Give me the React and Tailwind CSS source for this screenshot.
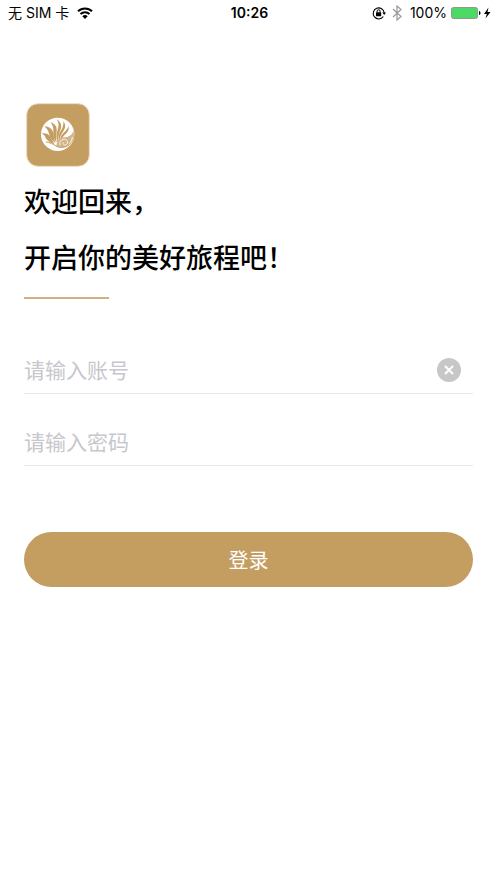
import { useState } from "react";

function Logo() {
    return (
        <svg viewBox="-30 -27 192 192" className="h-16 w-16" aria-hidden="true">
            <rect
                x="-28"
                y="-25"
                width="188"
                height="188"
                rx="34"
                fill="#c49d61"
                stroke="#eadcc5"
                strokeWidth="3"
            />
            <circle cx="65" cy="67" r="50" fill="#fff" />
            {/* feathers */}
            <g fill="#c49d61">
                <path d="M16 64c12-2 22 1 27 10 4 8 7 15 13 22-13-4-22-9-27-18-3-7-7-11-13-14z" />
                <path d="M25 43c15 1 25 8 27 21 1 11 3 20 7 29-12-8-18-17-20-28-2-9-7-17-14-22z" />
                <path d="M43 30c14 5 21 14 19 28-2 12-2 23 0 34-9-11-12-22-10-34 1-11-2-20-9-28z" />
                <path d="M62 22c13 8 17 19 11 32-5 13-7 25-7 38-6-12-6-25-1-38 4-12 4-22-3-32z" />
                <path d="M82 28c8 10 7 21-1 31-7 10-11 20-12 32-3-13-1-24 5-34 7-10 9-19 8-29z" />
                <path d="M97 42c3 9 0 17-8 24-8 7-13 15-17 25-1-13 3-22 11-29 7-6 12-12 14-20z" />
            </g>
            {/* shell */}
            <path
                d="M29 90c12 0 22 4 32 12 2-16 10-24 24-26 14-1 23-7 27-20 4 14 2 27-6 37-12 15-32 18-50 9-9-5-17-9-27-12z"
                fill="#d2b487"
            />
            <g fill="none" stroke="#fff" strokeWidth="2.500">
                <path d="M72 101c-3-10 3-19 13-19 9 0 13 10 7 15-6 5-13 0-10-6" />
                <path d="M99 97c6-6 9-14 10-22M44 94l14 8" />
            </g>
            <path
                d="M29 90c12 0 23 5 33 13 14 6 30 4 42-9"
                fill="none"
                stroke="#c49d61"
                strokeWidth="2.500"
            />
        </svg>
    );
}

function StatusBar() {
    return (
        <header className="grid grid-cols-3 items-center h-[26px] pl-2 pr-1.5 text-sm">
            <div className="flex items-center gap-2">
                <span>无 SIM 卡</span>
                <svg viewBox="0 0 16 12" className="w-4 h-3" aria-hidden="true">
                    <g fill="none" stroke="#000" strokeWidth="2">
                        <path d="M1 4.300a10 10 0 0 1 14 0" />
                        <path d="M3.500 7a6.500 6.500 0 0 1 9 0" />
                    </g>
                    <path d="M8 12 5.300 9.200a4 4 0 0 1 5.400 0z" />
                </svg>
            </div>
            <span className="text-center font-semibold">10:26</span>
            <div className="flex items-center justify-end">
                <svg
                    viewBox="0 0 14 14"
                    className="w-[14px] h-[14px] mr-1.5 shrink-0"
                    aria-hidden="true"
                >
                    <path
                        d="M11.300 10.500A5.500 5.500 0 1 1 12.200 7"
                        fill="none"
                        stroke="#000"
                        strokeWidth="1.100"
                    />
                    <path d="M10.300 6.500H14L12.200 9z" />
                    <rect x="4" y="6.300" width="5.200" height="3.900" rx="0.500" />
                    <path
                        d="M5.100 6.500V5.200a1.500 1.500 0 0 1 3 0v1.300"
                        fill="none"
                        stroke="#000"
                    />
                </svg>
                <svg
                    viewBox="0 0 10 16"
                    className="w-[10px] h-4 mr-2 shrink-0"
                    aria-hidden="true"
                >
                    <path
                        d="m1 4 8 7.500L5 15V1l4 3.500L1 12"
                        fill="none"
                        stroke="#999"
                        strokeWidth="1.200"
                    />
                </svg>
                <span>100%</span>
                <svg
                    viewBox="0 0 40 14"
                    className="w-10 h-[14px] ml-1 shrink-0"
                    aria-hidden="true"
                >
                    <rect
                        x="0.500"
                        y="1.500"
                        width="26"
                        height="11"
                        rx="2"
                        fill="#4cd964"
                        stroke="#8e9a90"
                    />
                    <path d="M28 5c2 .5 2 3.500 0 4z" />
                    <path d="M37.500 1.500 33 8h2.800l-1.300 4.500L39.500 6h-3z" />
                </svg>
            </div>
        </header>
    );
}

export default function App() {
    const [account, setAccount] = useState("");
    const [password, setPassword] = useState("");

    return (
        <div className="min-h-screen bg-white text-black font-[Inter,'Noto_Sans_CJK_SC',sans-serif]">
            <StatusBar />

            <main className="px-6 pt-[77px]">
                <div className="pl-0.5">
                    <Logo />
                </div>

                <h1 className="mt-1.5 text-[27px] leading-[56px] font-medium font-['Noto_Sans_CJK_SC',sans-serif]">
                    欢迎回来，
                    <br />
                    开启你的美好旅程吧！
                </h1>
                <div className="mt-3 w-[85px] h-0.5 bg-[#d3b084]" />

                <form
                    className="mt-[47px] font-['Noto_Sans_CJK_SC',sans-serif]"
                    onSubmit={(e) => e.preventDefault()}
                >
                    <div className="flex items-center h-12 border-b border-[#e8e8e8] pr-3">
                        <input
                            type="text"
                            aria-label="账号"
                            value={account}
                            onChange={(e) => setAccount(e.target.value)}
                            placeholder="请输入账号"
                            className="flex-1 min-w-0 text-[21px] outline-none placeholder:text-[#c7c7cd]"
                        />
                        <button
                            type="button"
                            aria-label="清除"
                            onClick={() => setAccount("")}
                        >
                            <svg viewBox="0 0 24 24" className="w-6 h-6">
                                <circle cx="12" cy="12" r="12" fill="#c7c7c7" />
                                <path
                                    d="m8 8 8 8m0-8-8 8"
                                    stroke="#fff"
                                    strokeWidth="2"
                                />
                            </svg>
                        </button>
                    </div>
                    <div className="flex items-center h-12 mt-6 border-b border-[#e8e8e8]">
                        <input
                            type="password"
                            aria-label="密码"
                            value={password}
                            onChange={(e) => setPassword(e.target.value)}
                            placeholder="请输入密码"
                            className="flex-1 min-w-0 text-[21px] outline-none placeholder:text-[#c7c7cd]"
                        />
                    </div>

                    <button
                        type="submit"
                        className="mt-[66px] w-full h-[55px] rounded-full bg-[#c49d61] text-white text-xl"
                    >
                        登录
                    </button>
                </form>
            </main>
        </div>
    );
}
